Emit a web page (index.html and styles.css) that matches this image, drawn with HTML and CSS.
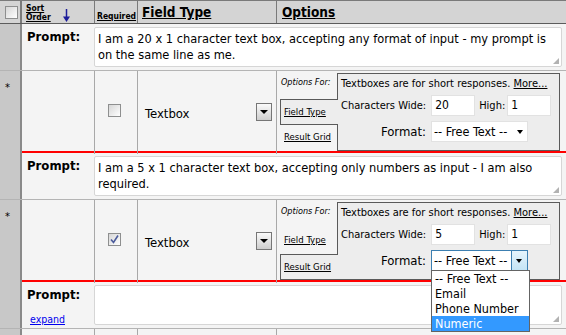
FILE: index.html
```html
<!DOCTYPE html>
<html lang="en">
<head>
    <meta charset="UTF-8">
    <title>Form Fields</title>
    <link rel="stylesheet" href="styles.css">
</head>
<body>
    <div class="field-list">
        <div class="head">
            <div class="h-cell h-gutter"><span class="checkbox"></span></div>
            <div class="h-cell h-sort">
                <a href="#">Sort<br>Order</a>
                <svg class="sort-arrow" width="7" height="13" viewBox="0 0 7 13">
                    <line x1="3.5" y1="0" x2="3.5" y2="9" stroke="#1c1c99" stroke-width="1.5"/>
                    <polygon points="0,7.5 7,7.5 3.5,13" fill="#1c1c99"/>
                </svg>
            </div>
            <div class="h-cell h-req"><a href="#">Required</a></div>
            <div class="h-cell h-type"><a href="#">Field Type</a></div>
            <div class="h-cell h-opts"><a href="#">Options</a></div>
        </div>

        <!-- field 1 -->
        <div class="item">
            <div class="prompt-row">
                <div class="gutter"></div>
                <div class="prompt-label"><b>Prompt:</b></div>
                <div class="prompt-box">
                    <div class="textarea">I am a 20 x 1 character text box, accepting any format of input - my prompt is on the same line as me.<span class="grip"></span></div>
                </div>
            </div>
            <div class="field-row">
                <div class="gutter">*</div>
                <div class="cell"></div>
                <div class="cell req-cell"><span class="checkbox"></span></div>
                <div class="cell type-cell"><span>Textbox</span><span class="drop-btn"></span></div>
                <div class="cell opts-cell">
                    <div class="tabs">
                        <div class="tab-label">Options For:</div>
                        <a href="#" class="tab active">Field Type</a>
                        <a href="#" class="tab">Result Grid</a>
                    </div>
                    <div class="panel">
                        <div class="panel-note">Textboxes are for short responses. <a href="#">More...</a></div>
                        <div class="panel-row">
                            <label>Characters Wide:</label>
                            <span class="input">20</span>
                            <label class="high">High:</label>
                            <span class="input">1</span>
                        </div>
                        <div class="panel-row">
                            <label class="format">Format:</label>
                            <span class="select">-- Free Text --<span class="select-arrow"></span></span>
                        </div>
                    </div>
                </div>
            </div>
        </div>

        <!-- field 2 -->
        <div class="item">
            <div class="prompt-row">
                <div class="gutter"></div>
                <div class="prompt-label"><b>Prompt:</b></div>
                <div class="prompt-box">
                    <div class="textarea">I am a 5 x 1 character text box, accepting only numbers as input - I am also required.<span class="grip"></span></div>
                </div>
            </div>
            <div class="field-row">
                <div class="gutter">*</div>
                <div class="cell"></div>
                <div class="cell req-cell">
                    <span class="checkbox">
                        <svg width="11" height="11" viewBox="0 0 11 11"><path d="M2 5.5 L4.5 8.5 L9 1.5" fill="none" stroke="#4b5b9b" stroke-width="1.6"/></svg>
                    </span>
                </div>
                <div class="cell type-cell"><span>Textbox</span><span class="drop-btn"></span></div>
                <div class="cell opts-cell">
                    <div class="tabs">
                        <div class="tab-label">Options For:</div>
                        <a href="#" class="tab">Field Type</a>
                        <a href="#" class="tab active">Result Grid</a>
                    </div>
                    <div class="panel">
                        <div class="panel-note">Textboxes are for short responses. <a href="#">More...</a></div>
                        <div class="panel-row">
                            <label>Characters Wide:</label>
                            <span class="input">5</span>
                            <label class="high">High:</label>
                            <span class="input">1</span>
                        </div>
                        <div class="panel-row">
                            <label class="format">Format:</label>
                            <span class="select open">-- Free Text --<span class="select-btn"></span>
                                <span class="select-list">
                                    <span class="option">-- Free Text --</span>
                                    <span class="option">Email</span>
                                    <span class="option">Phone Number</span>
                                    <span class="option hover">Numeric</span>
                                </span>
                            </span>
                        </div>
                    </div>
                </div>
            </div>
        </div>

        <!-- field 3 -->
        <div class="item">
            <div class="prompt-row">
                <div class="gutter"></div>
                <div class="prompt-label">
                    <b>Prompt:</b>
                    <a href="#" class="expand">expand</a>
                </div>
                <div class="prompt-box">
                    <div class="textarea"><span class="grip"></span></div>
                </div>
            </div>
            <div class="field-row">
                <div class="gutter"></div>
                <div class="cell"></div>
                <div class="cell req-cell"></div>
                <div class="cell type-cell"></div>
                <div class="cell opts-cell"></div>
            </div>
        </div>
    </div>
</body>
</html>
```

FILE: styles.css
```css
body {
    margin: 0;
    width: 566px;
    height: 335px;
    overflow: hidden;
    font-family: "DejaVu Sans Condensed", "DejaVu Sans", sans-serif;
    font-size: 13px;
    color: #000;
    background: #f4f4f4;
}

a {
    color: #000;
}

/* header */
.head {
    display: grid;
    grid-template-columns: 22px 73px 43px 139px 1fr;
    height: 24px;
    box-sizing: border-box;
    background: #d4d4d4;
    border-top: 1px solid #7a7a7a;
    border-bottom: 1px solid #5c5c5c;
}

.h-cell {
    border-right: 1px solid #7a7a7a;
    font-weight: bold;
}

.h-cell:last-child {
    border-right: none;
}

.h-gutter {
    border-right: 2px solid #7a7a7a;
    padding: 5px 0 0 5px;
}

.h-sort {
    display: flex;
    align-items: flex-start;
    padding: 3px 0 0 4px;
    font-size: 8.5px;
    line-height: 9px;
}

.sort-arrow {
    margin: 5px 0 0 12px;
}

.h-req {
    font-size: 8.5px;
    padding: 10px 0 0 2px;
}

.h-type,
.h-opts {
    font-size: 13.5px;
    padding: 3px 0 0 4px;
}

.h-opts {
    padding-left: 5px;
}

/* checkboxes */
.checkbox {
    display: inline-block;
    width: 11px;
    height: 11px;
    border: 1px solid #8e8f8f;
    background: linear-gradient(135deg, #d6d6d6, #ffffff);
    vertical-align: top;
}

.checkbox svg {
    display: block;
}

/* rows */
.item {
    border-bottom: 2px solid #ff0000;
}

.prompt-row {
    display: grid;
    grid-template-columns: 22px 72px 1fr;
    border-bottom: 1px solid #b4b4b4;
}

.gutter {
    background: #c8c8c8;
    border-right: 2px solid #8a8a8a;
    box-sizing: border-box;
    font-size: 11px;
    padding: 10px 0 0 5px;
}

.prompt-label {
    display: flex;
    flex-direction: column;
    align-items: flex-start;
    padding: 5px 0 0 5px;
    font-size: 13px;
}

.expand {
    color: #0000ee;
    font-size: 10.5px;
    margin: 11px 0 0 3px;
}

.prompt-box {
    padding: 3px 4px 3px 0;
}

.textarea {
    position: relative;
    height: 40px;
    box-sizing: border-box;
    padding: 3px 5px 0 3px;
    background: #fff;
    border: 1px solid #d6d6d6;
    border-radius: 2px;
    font-size: 12.7px;
    line-height: 16px;
}

.grip {
    position: absolute;
    right: 2px;
    bottom: 2px;
    width: 6px;
    height: 6px;
    background: radial-gradient(circle, #b0b0b0 0.7px, transparent 1px) 0 0 / 2px 2px;
    clip-path: polygon(100% 0, 100% 100%, 0 100%);
}

.field-row {
    display: grid;
    grid-template-columns: 22px 73px 43px 139px 1fr;
    height: 80px;
}

.cell {
    border-right: 1px solid #a8a8a8;
}

.cell:last-child {
    border-right: none;
}

.req-cell {
    display: flex;
    justify-content: center;
    align-items: center;
    padding: 0 3px 4px 0;
}

.type-cell {
    display: flex;
    align-items: center;
    justify-content: space-between;
    padding: 2px 4px 0 7px;
}

.drop-btn {
    position: relative;
    width: 14px;
    height: 16px;
    border: 1px solid #767676;
    background: linear-gradient(#fafafa, #cdcdcd);
    margin-bottom: 4px;
}

.drop-btn::after {
    content: "";
    position: absolute;
    left: 3px;
    top: 6px;
    border-left: 4px solid transparent;
    border-right: 4px solid transparent;
    border-top: 4px solid #000;
}

/* options */
.opts-cell {
    display: flex;
    padding: 2px 6px 3px 3px;
}

.tabs {
    width: 57px;
    display: flex;
    flex-direction: column;
}

.tab-label {
    height: 26px;
    box-sizing: border-box;
    padding: 4px 0 0 1px;
    font-size: 9px;
    font-style: italic;
    white-space: nowrap;
}

.tab {
    display: block;
    height: 26px;
    box-sizing: border-box;
    padding: 6px 0 0 4px;
    font-size: 9.5px;
    color: #000;
}

.tab.active {
    position: relative;
    z-index: 1;
    margin-right: -1px;
    background: #ededed;
    border: 1px solid #5a5a5a;
    border-right: none;
    padding-left: 3px;
}

.panel {
    flex: 1;
    background: #ededed;
    border: 1px solid #5a5a5a;
    padding: 3px 0 0 3px;
}

.panel-note {
    font-size: 11px;
    height: 18px;
}

.panel-row {
    display: flex;
    align-items: center;
    height: 21px;
    margin-bottom: 5px;
    font-size: 12px;
}

.panel-row label {
    min-width: 85px;
    white-space: nowrap;
    font-size: 11px;
    text-align: right;
    margin-right: 5px;
}

.panel-row .high {
    min-width: 0;
    margin: 0 2px 0 4px;
}

.panel-row .format {
    font-size: 13px;
}

.input {
    width: 44px;
    height: 21px;
    box-sizing: border-box;
    background: #fff;
    border: 1px solid #e2e2e2;
    padding: 2px 0 0 3px;
}

.select {
    position: relative;
    width: 97px;
    height: 21px;
    box-sizing: border-box;
    background: #fff;
    border: 1px solid #e2e2e2;
    padding: 2px 0 0 2px;
    font-size: 12.5px;
}

.select-arrow {
    position: absolute;
    right: 4px;
    top: 8px;
    border-left: 3.5px solid transparent;
    border-right: 3.5px solid transparent;
    border-top: 4px solid #000;
}

.select.open {
    border-color: #3c7fb1;
}

.select-btn {
    position: absolute;
    right: 0;
    top: 0;
    width: 15px;
    height: 19px;
    border-left: 1px solid #3c7fb1;
    background: linear-gradient(#e5f4fc, #c4e5f6);
}

.select-btn::after {
    content: "";
    position: absolute;
    left: 4px;
    top: 8px;
    border-left: 3.5px solid transparent;
    border-right: 3.5px solid transparent;
    border-top: 4px solid #000;
}

.select-list {
    position: absolute;
    z-index: 2;
    left: -1px;
    top: 19px;
    width: 99px;
    box-sizing: border-box;
    background: #fff;
    border: 1px solid #646464;
    font-size: 12.5px;
}

.option {
    display: block;
    height: 15px;
    line-height: 15px;
    padding-left: 3px;
}

.option.hover {
    background: #3399ff;
    color: #fff;
}
```
